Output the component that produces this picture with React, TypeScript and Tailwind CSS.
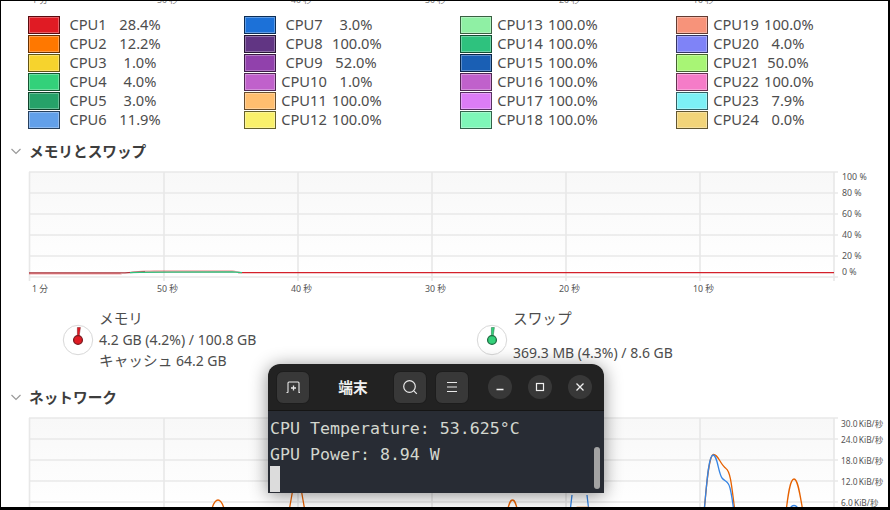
import type { ReactNode } from "react";

const CPU_ROWS = [
  [
    ["CPU1", "28.4%", "#e01b24"],
    ["CPU2", "12.2%", "#ff7800"],
    ["CPU3", "1.0%", "#f6d32d"],
    ["CPU4", "4.0%", "#33d17a"],
    ["CPU5", "3.0%", "#26a269"],
    ["CPU6", "11.9%", "#62a0ea"],
  ],
  [
    ["CPU7", "3.0%", "#1c71d8"],
    ["CPU8", "100.0%", "#613583"],
    ["CPU9", "52.0%", "#9141ac"],
    ["CPU10", "1.0%", "#c061cb"],
    ["CPU11", "100.0%", "#ffbe6f"],
    ["CPU12", "100.0%", "#f9f06b"],
  ],
  [
    ["CPU13", "100.0%", "#8ff0a4"],
    ["CPU14", "100.0%", "#2ec27e"],
    ["CPU15", "100.0%", "#1a5fb4"],
    ["CPU16", "100.0%", "#c061cb"],
    ["CPU17", "100.0%", "#dc7cf5"],
    ["CPU18", "100.0%", "#7ef7b8"],
  ],
  [
    ["CPU19", "100.0%", "#f7937a"],
    ["CPU20", "4.0%", "#7f83f7"],
    ["CPU21", "50.0%", "#a8f575"],
    ["CPU22", "100.0%", "#f57cc8"],
    ["CPU23", "7.9%", "#7cf0f5"],
    ["CPU24", "0.0%", "#f2d479"],
  ],
];

const FONT = "font-['Noto_Sans','Noto_Sans_CJK_JP',sans-serif]";
const svgFont = "'Noto Sans','Noto Sans CJK JP',sans-serif";

const VERT = [29.5, 164, 298, 432, 566, 700, 834];
const TIME_LABELS = [
  [32, "1 分"],
  [157, "50 秒"],
  [291, "40 秒"],
  [425, "30 秒"],
  [559, "20 秒"],
  [693, "10 秒"],
] as const;

function Grid({ rows, bottom }: { rows: number[]; bottom: number }) {
  return (
    <g stroke="#e8e8e8" strokeWidth="1.6" fill="none">
      {rows.map((y) => (
        <line key={y} x1={29} x2={838} y1={y} y2={y} />
      ))}
      {VERT.map((x) => (
        <line key={x} x1={x} x2={x} y1={rows[0]} y2={bottom} />
      ))}
    </g>
  );
}

function Swatch({ color }: { color: string }) {
  return (
    <span className="relative block w-[32px] h-[18px] border border-black/60 shrink-0" style={{ background: color }}>
      <span className="absolute inset-0 border border-white/30" />
    </span>
  );
}

function Legend() {
  return (
    <div className="flex pl-[28px] pt-[10px] text-[14.67px] text-[#4d4d4d] leading-[19px]">
      {CPU_ROWS.map((col, i) => (
        <div key={i} className="w-[216px] shrink-0 flex flex-col">
          {col.map(([name, value, color]) => (
            <div key={name} className="flex items-center h-[19px]">
              <Swatch color={color} />
              <span className="w-[56px] text-center">{name}</span>
              <span className="w-[48px] text-center">{value}</span>
            </div>
          ))}
        </div>
      ))}
    </div>
  );
}

function SectionTitle({ title }: { title: string }) {
  return (
    <div className="flex items-center h-[20px] pl-[10px] gap-[7px] text-[14.67px] font-bold text-[#3d3d3d]">
      <svg width="12" height="12" viewBox="0 0 12 12" fill="none" stroke="#9a9a9a" strokeWidth="1.2">
        <path d="M1.5 4l4.5 4.5L10.5 4" />
      </svg>
      <span>{title}</span>
    </div>
  );
}

function MemoryChart() {
  const rows = [172, 193, 214, 235, 256, 277];
  const labels = [
    [176.5, "100 %"],
    [192.5, "80 %"],
    [213.5, "60 %"],
    [234.5, "40 %"],
    [255.5, "20 %"],
    [271.5, "0 %"],
  ] as const;
  return (
    <svg width="890" height="134" viewBox="0 160 890 134" className="block shrink-0 -mt-[1px]">
      <defs>
        <linearGradient id="memBg" x1="0" x2="0" y1="0" y2="1">
          <stop offset="0" stopColor="#f8f8f8" />
          <stop offset="1" stopColor="#ffffff" />
        </linearGradient>
      </defs>
      <rect x="29" y="172" width="805" height="105" fill="url(#memBg)" />
      <Grid rows={rows} bottom={281} />
      <path d="M29 273 L120 273 L122 274.500 L29 274.500Z" fill="#e01b24" opacity="0.4" />
      <path d="M125 272.800 C135 271 145 270.300 160 270.300 L232 270.300 C238 271 240 272.500 246 272.500 L125 272.800Z" fill="#e01b24" opacity="0.4" />
      <path d="M29 272.800 L125 272.800 C132 272.500 138 272 145 271.800" fill="none" stroke="#a8323a" strokeWidth="1.300" />
      <path d="M238 272.600 L834 272.600" fill="none" stroke="#d4202a" strokeWidth="1.300" />
      <path d="M130 272.600 C140 271.900 150 271.900 232 271.900 L242 272.600" fill="none" stroke="#2ec27e" strokeWidth="1.400" />
      <g fontSize="8.8" fill="#555" fontFamily={svgFont}>
        {labels.map(([y, t]) => (
          <text key={t} x={842} y={y + 3}>{t}</text>
        ))}
        {TIME_LABELS.map(([x, t]) => (
          <text key={t} x={x} y={292}>{t}</text>
        ))}
      </g>
    </svg>
  );
}

function NetworkChart() {
  const rows = [418, 439, 460, 481, 502];
  const labels = [
    [423.5, "30.0 KiB/秒"],
    [439.5, "24.0 KiB/秒"],
    [460.5, "18.0 KiB/秒"],
    [481.5, "12.0 KiB/秒"],
    [502.5, "6.0 KiB/秒"],
  ] as const;
  return (
    <svg width="890" height="106" viewBox="0 408 890 106" className="block shrink-0 mt-[1px]">
      <defs>
        <linearGradient id="netBg" x1="0" x2="0" y1="0" y2="1">
          <stop offset="0" stopColor="#f8f8f8" />
          <stop offset="1" stopColor="#ffffff" />
        </linearGradient>
      </defs>
      <rect x="29" y="418" width="805" height="92" fill="url(#netBg)" />
      <Grid rows={rows} bottom={512} />
      <g fill="none" strokeWidth="1.3">
        <path d="M211 512 C213 504 215 500 218 500 C221 500 223 504 225 512" stroke="#e66100" />
        <path d="M289 512 C290 505 292 495 293 488 M301 488 C302 495 304 505 305 512" stroke="#e66100" />
        <path d="M507 512 C509 504 510 500 512.500 500 C515 500 516 504 518 512" stroke="#e66100" />
        <path d="M570 512 L572 495 M587 495 L589 512" stroke="#3584e4" />
        <path d="M574 512 L577 507.500 L589 507.500 L592 512" stroke="#e66100" />
        <path d="M704 512 C706 495 708 455 713.500 454.500 C718 454 720 464 726 468.500 C731 472 732 490 735 512" stroke="#e66100" />
        <path d="M704 512 C706 495 708 455 713 455 C717.500 455 718 472 722 478 C725 482 728 480 730 488 C732 496 733 505 734 512" stroke="#3584e4" />
        <path d="M786 512 C788 495 790 479 794 479 C798 479 800 495 803 512" stroke="#e66100" />
        <path d="M788 512 C790 507 792 505.500 794 505.500 C796 505.500 798 507 800 512" stroke="#3584e4" />
      </g>
      <g fontSize="8.4" fill="#555" fontFamily={svgFont} wordSpacing="-1">
        {labels.map(([y, t]) => (
          <text key={t} x={841} y={y + 3}>{t}</text>
        ))}
      </g>
    </svg>
  );
}

function Gauge({ color, dark }: { color: string; dark: string }) {
  return (
    <svg width="32" height="32" viewBox="0 0 32 32" className="shrink-0 -ml-[0.500px]">
      <circle cx="16" cy="16" r="14.700" fill="#fff" stroke="#d8d8d8" strokeWidth="1" />
      <path d="M15.400 3.500 L18.400 3.500 L17 13 L15.400 13Z" fill={color} stroke={dark} strokeWidth="0.5" />
      <circle cx="16" cy="16" r="4.400" fill={color} stroke={dark} strokeWidth="1.300" />
    </svg>
  );
}

function Usage() {
  return (
    <div className="flex h-[93px] pt-[13px] text-[14px] text-[#4d4d4d] leading-[21.500px] shrink-0">
      <div className="w-[414px] flex pl-[62px] items-center gap-[5.500px] h-[66px]">
        <Gauge color="#e01b24" dark="#7a1a20" />
        <div className="h-[64.500px]">
          <div className="text-[14.67px]">メモリ</div>
          <div>4.2 GB (4.2%) / 100.8 GB</div>
          <div className="h-[21.500px] -mt-[1px]"><span className="text-[14.67px]">キャッシュ</span> 64.2 GB</div>
        </div>
      </div>
      <div className="flex pl-[62px] items-center gap-[5.500px] h-[66px]">
        <Gauge color="#33d17a" dark="#1f6b42" />
        <div className="h-[64.500px]">
          <div className="text-[14.67px]">スワップ</div>
          <div className="mt-[12.500px]">369.3 MB (4.3%) / 8.6 GB</div>
        </div>
      </div>
    </div>
  );
}

function HeaderButton({ children }: { children: ReactNode }) {
  return (
    <div className="w-[34px] h-[33px] rounded-[7px] bg-[#383838] border border-[#1d1d1d] flex items-center justify-center">
      {children}
    </div>
  );
}

function Circle({ children }: { children: ReactNode }) {
  return <div className="w-[24px] h-[24px] rounded-full bg-[#383838] flex items-center justify-center">{children}</div>;
}

function Terminal() {
  return (
    <div className="absolute left-[268px] top-[364px] w-[336px] h-[129px] rounded-t-[12px] overflow-hidden shadow-[0_2px_18px_rgba(0,0,0,0.45)] flex flex-col">
      <div className="h-[47px] bg-[#222222] border-b border-[#151515] flex items-center pl-[8px] shrink-0">
        <HeaderButton>
          <svg width="16" height="16" viewBox="0 0 16 16" fill="none" stroke="#e8e8e8" strokeWidth="1.100">
            <path d="M1.500 13.500h1a0.500 0.500 0 0 0 0.500-0.500V4a1 1 0 0 1 1-1h9a1 1 0 0 1 1 1v9.500h1" />
            <path d="M8.500 6.500v5M6 9h5" strokeWidth="1.300" />
          </svg>
        </HeaderButton>
        <div className={`w-[83px] pl-[3px] text-center text-[14.67px] font-bold text-[#f0f0f0] ${FONT}`}>端末</div>
        <HeaderButton>
          <svg width="16" height="16" viewBox="0 0 16 16" fill="none" stroke="#e8e8e8" strokeWidth="1.200">
            <circle cx="7.500" cy="7.500" r="5.800" />
            <path d="M11.800 11.800l3 3" />
          </svg>
        </HeaderButton>
        <div className="w-[8px]" />
        <HeaderButton>
          <svg width="16" height="16" viewBox="0 0 16 16" fill="none" stroke="#e8e8e8" strokeWidth="1.100">
            <path d="M3 3.500h10M3 8h10M3 12.500h10" />
          </svg>
        </HeaderButton>
        <div className="w-[19px]" />
        <Circle>
          <svg width="12" height="12" viewBox="0 0 12 12" fill="none" stroke="#f0f0f0" strokeWidth="1.300">
            <path d="M2.500 8.500h7" />
          </svg>
        </Circle>
        <div className="w-[16px]" />
        <Circle>
          <svg width="12" height="12" viewBox="0 0 12 12" fill="none" stroke="#f0f0f0" strokeWidth="1.200">
            <rect x="2.500" y="2.500" width="7" height="7" />
          </svg>
        </Circle>
        <div className="w-[16px]" />
        <Circle>
          <svg width="12" height="12" viewBox="0 0 12 12" fill="none" stroke="#f0f0f0" strokeWidth="1.300">
            <path d="M2.500 2.500l7 7M9.500 2.500l-7 7" />
          </svg>
        </Circle>
      </div>
      <div className="relative flex-1 bg-[#282c34] pl-[2px] pt-[5px] font-['DejaVu_Sans_Mono',monospace] text-[16.6px] leading-[26px] text-[#d3d7cf]">
        <div>CPU Temperature: 53.625°C</div>
        <div>GPU Power: 8.94 W</div>
        <div className="w-[10px] h-[26px] -mt-[2px] bg-[#dcdcdc]" />
        <div className="absolute right-[4px] top-[36px] w-[6px] h-[42px] rounded-full bg-[#a3a3a3]" />
      </div>
    </div>
  );
}

export default function App() {
  return (
    <div className={`relative w-[890px] h-[510px] overflow-hidden bg-black ${FONT}`}>
      <div className="ml-[1px] mt-[1px] w-[887px] h-[506px] bg-white overflow-hidden flex flex-col [&>*]:-ml-[1px]">
        <div className="h-[4px] shrink-0 overflow-hidden">
          <svg width="890" height="4" viewBox="0 -2 890 4" className="block">
            <g fontSize="8.800" fill="#777" fontFamily={svgFont}>
              {TIME_LABELS.map(([x, t]) => (
                <text key={t} x={x} y={0}>{t}</text>
              ))}
            </g>
          </svg>
        </div>
        <Legend />
        <div className="h-[12px] shrink-0" />
        <SectionTitle title="メモリとスワップ" />
        <MemoryChart />
        <Usage />
        <SectionTitle title="ネットワーク" />
        <NetworkChart />
      </div>
      <Terminal />
    </div>
  );
}
